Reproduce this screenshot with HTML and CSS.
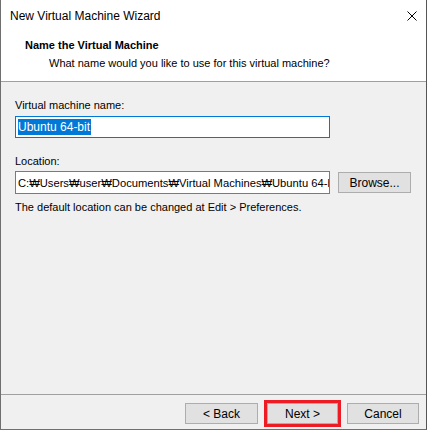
FILE: index.html
```html
<!DOCTYPE html>
<html>
<head>
<meta charset="utf-8">
<link rel="stylesheet" href="styles.css">
</head>
<body>
<div class="window">
  <div class="titlebar">
    <span class="title">New Virtual Machine Wizard</span>
    <svg class="close" width="10" height="10" viewBox="0 0 10 10"><path d="M0.5 0.5 L9.5 9.5 M9.5 0.5 L0.5 9.5" stroke="#000" stroke-width="1" fill="none"/></svg>
  </div>
  <div class="header">
    <div class="h-title">Name the Virtual Machine</div>
    <div class="h-sub">What name would you like to use for this virtual machine?</div>
  </div>
  <div class="content">
    <div class="label first">Virtual machine name:</div>
    <div class="input focused"><span class="sel">Ubuntu 64-bit</span></div>
    <div class="label second">Location:</div>
    <div class="row">
      <div class="input path"><span class="path-text">C:₩Users₩user₩Documents₩Virtual Machines₩Ubuntu 64-bit</span></div>
      <div class="btn browse">Browse...</div>
    </div>
    <div class="hint">The default location can be changed at Edit &gt; Preferences.</div>
  </div>
  <div class="footer">
    <div class="btn back">&lt; Back</div>
    <div class="btn next">Next &gt;</div>
    <div class="btn cancel">Cancel</div>
  </div>
</div>
</body>
</html>
```
FILE: styles.css
```css
html, body { margin: 0; padding: 0; background: #ffffff; }
body { font-family: "Liberation Sans", "Noto Sans", sans-serif; font-size: 11px; color: #000; }
.window {
  width: 427px; height: 430px; box-sizing: border-box;
  border-left: 1px solid #6f6f6f; border-right: 1px solid #555; border-bottom: 1px solid #6f6f6f;
  display: flex; flex-direction: column; background: #fff;
}
.titlebar { height: 31px; display: flex; align-items: center; justify-content: space-between; padding: 0 9px 0 9px; }
.title { line-height: 16px; font-size: 12px; }
.header { height: 51px; border-bottom: 1px solid #a0a0a0; padding-left: 24px; padding-top: 5px; box-sizing: border-box; }
.h-title { font-weight: bold; line-height: 18px; }
.h-sub { padding-left: 24px; line-height: 18px; }
.content { flex: 1; background: #f0f0f0; padding: 0 14px; }
.label { line-height: 16px; }
.label.first { margin-top: 15px; }
.label.second { margin-top: 15px; }
.input {
  height: 22px; box-sizing: border-box; width: 315px; background: #fff;
  border: 1px solid #7a7a7a; display: flex; align-items: center; padding-left: 2px;
  white-space: nowrap; overflow: hidden;
}
.focused { margin-top: 3px; border-color: #0078d7; }
.sel { background: #0078d7; color: #fff; line-height: 16px; padding-right: 1px; font-size: 12px; }
.row { display: flex; align-items: center; gap: 8px; margin-top: 2px; }
.path { height: 23px; flex: none; }
.path-text { font-size: 11.2px; }
.btn {
  box-sizing: border-box; background: #e1e1e1; border: 1px solid #adadad;
  display: flex; align-items: center; justify-content: center; height: 21px; flex: none;
  font-size: 12px;
}
.browse { width: 73px; }
.hint { margin-top: 5px; line-height: 16px; }
.footer {
  height: 35px; border-top: 1px solid #a0a0a0; background: #f0f0f0;
  display: flex; justify-content: flex-end; align-items: flex-start; gap: 9px; padding: 8px 7px 0 0;
  box-sizing: border-box;
}
.back { width: 73px; }
.next { width: 71px; outline: 3px solid #ed1c24; }
.cancel { width: 72px; }
```
